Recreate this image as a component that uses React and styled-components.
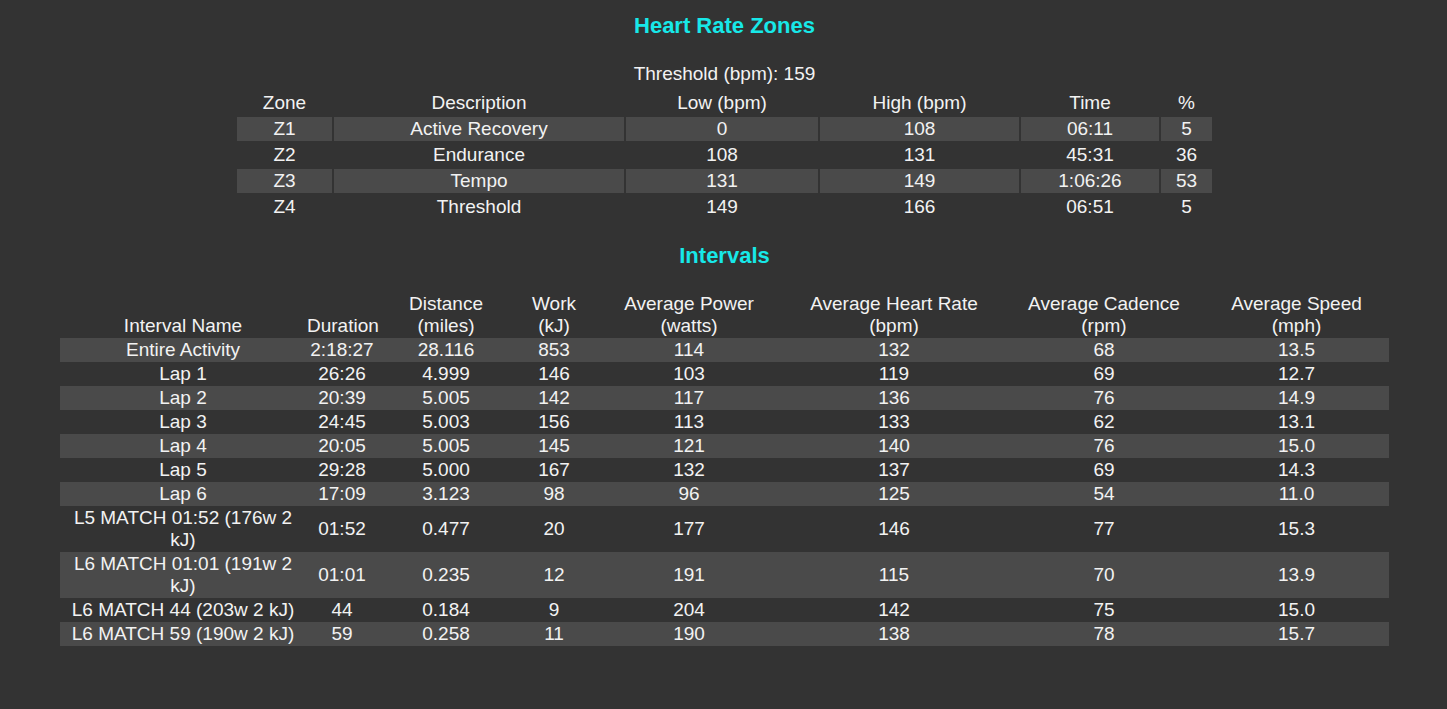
import React from "react";
import styled, { createGlobalStyle } from "styled-components";

const GlobalStyle = createGlobalStyle`
  body {
    margin: 0;
    background: #333333;
    font-family: "Liberation Sans", Arial, sans-serif;
    color: #f2f2f2;
  }
`;

const Page = styled.div`
  display: flex;
  flex-direction: column;
  align-items: center;
  padding: 13px 0 40px 2px;
  min-height: 709px;
  box-sizing: border-box;
`;

const Title = styled.h2`
  margin: 0;
  font-size: 22px;
  line-height: 26px;
  font-weight: bold;
  color: #17e8e8;
  text-align: center;
`;

const Threshold = styled.div`
  margin-top: 24px;
  font-size: 19px;
  line-height: 22px;
`;

const Table = styled.table`
  table-layout: fixed;
  width: ${p => p.$width}px;
  border-collapse: separate;
  border-spacing: ${p => p.$spacing}px;
  margin-top: ${p => p.$top}px;
  margin-bottom: ${p => p.$bottom}px;
  font-size: 19px;
  line-height: 22px;
`;

const Th = styled.th`
  font-weight: normal;
  padding: 1px;
  text-align: center;
  vertical-align: bottom;
`;

const Row = styled.tr`
  background: ${p => (p.$striped ? "#4a4a4a" : "transparent")};
`;

const Td = styled.td`
  padding: 1px;
  text-align: center;
  vertical-align: middle;
`;

const zones = [
  ["Z1", "Active Recovery", "0", "108", "06:11", "5"],
  ["Z2", "Endurance", "108", "131", "45:31", "36"],
  ["Z3", "Tempo", "131", "149", "1:06:26", "53"],
  ["Z4", "Threshold", "149", "166", "06:51", "5"]
];

const zoneCols = [95, 290, 192, 199, 138, 51];
const zoneHeads = ["Zone", "Description", "Low (bpm)", "High (bpm)", "Time", "%"];

const intervals = [
  ["Entire Activity", "2:18:27", "28.116", "853", "114", "132", "68", "13.5"],
  ["Lap 1", "26:26", "4.999", "146", "103", "119", "69", "12.7"],
  ["Lap 2", "20:39", "5.005", "142", "117", "136", "76", "14.9"],
  ["Lap 3", "24:45", "5.003", "156", "113", "133", "62", "13.1"],
  ["Lap 4", "20:05", "5.005", "145", "121", "140", "76", "15.0"],
  ["Lap 5", "29:28", "5.000", "167", "132", "137", "69", "14.3"],
  ["Lap 6", "17:09", "3.123", "98", "96", "125", "54", "11.0"],
  ["L5 MATCH 01:52 (176w 2 kJ)", "01:52", "0.477", "20", "177", "146", "77", "15.3"],
  ["L6 MATCH 01:01 (191w 2 kJ)", "01:01", "0.235", "12", "191", "115", "70", "13.9"],
  ["L6 MATCH 44 (203w 2 kJ)", "44", "0.184", "9", "204", "142", "75", "15.0"],
  ["L6 MATCH 59 (190w 2 kJ)", "59", "0.258", "11", "190", "138", "78", "15.7"]
];

const intervalCols = [246, 72, 136, 80, 190, 220, 200, 185];
const intervalHeads = [
  ["Interval Name"],
  ["Duration"],
  ["Distance", "(miles)"],
  ["Work", "(kJ)"],
  ["Average Power", "(watts)"],
  ["Average Heart Rate", "(bpm)"],
  ["Average Cadence", "(rpm)"],
  ["Average Speed", "(mph)"]
];

const App = () => {
  return (
    <Page>
      <GlobalStyle />
      <Title>Heart Rate Zones</Title>
      <Threshold>Threshold (bpm): 159</Threshold>
      <Table $width={979} $spacing={2} $top={4} $bottom={22}>
        <colgroup>
          {zoneCols.map((w, i) => (
            <col key={i} style={{ width: w }} />
          ))}
        </colgroup>
        <thead>
          <tr>
            {zoneHeads.map(h => (
              <Th key={h}>{h}</Th>
            ))}
          </tr>
        </thead>
        <tbody>
          {zones.map((z, i) => (
            <Row key={z[0]} $striped={i % 2 === 0}>
              {z.map((c, j) => (
                <Td key={j}>{c}</Td>
              ))}
            </Row>
          ))}
        </tbody>
      </Table>

      <Title>Intervals</Title>
      <Table $width={1329} $spacing={0} $top={23} $bottom={0}>
        <colgroup>
          {intervalCols.map((w, i) => (
            <col key={i} style={{ width: w }} />
          ))}
        </colgroup>
        <thead>
          <tr>
            {intervalHeads.map(h => (
              <Th key={h[0]}>
                {h[0]}
                {h[1] && <br />}
                {h[1]}
              </Th>
            ))}
          </tr>
        </thead>
        <tbody>
          {intervals.map((r, i) => (
            <Row key={r[0]} $striped={i % 2 === 0}>
              {r.map((c, j) => (
                <Td key={j}>{c}</Td>
              ))}
            </Row>
          ))}
        </tbody>
      </Table>
    </Page>
  );
};

export default App;
